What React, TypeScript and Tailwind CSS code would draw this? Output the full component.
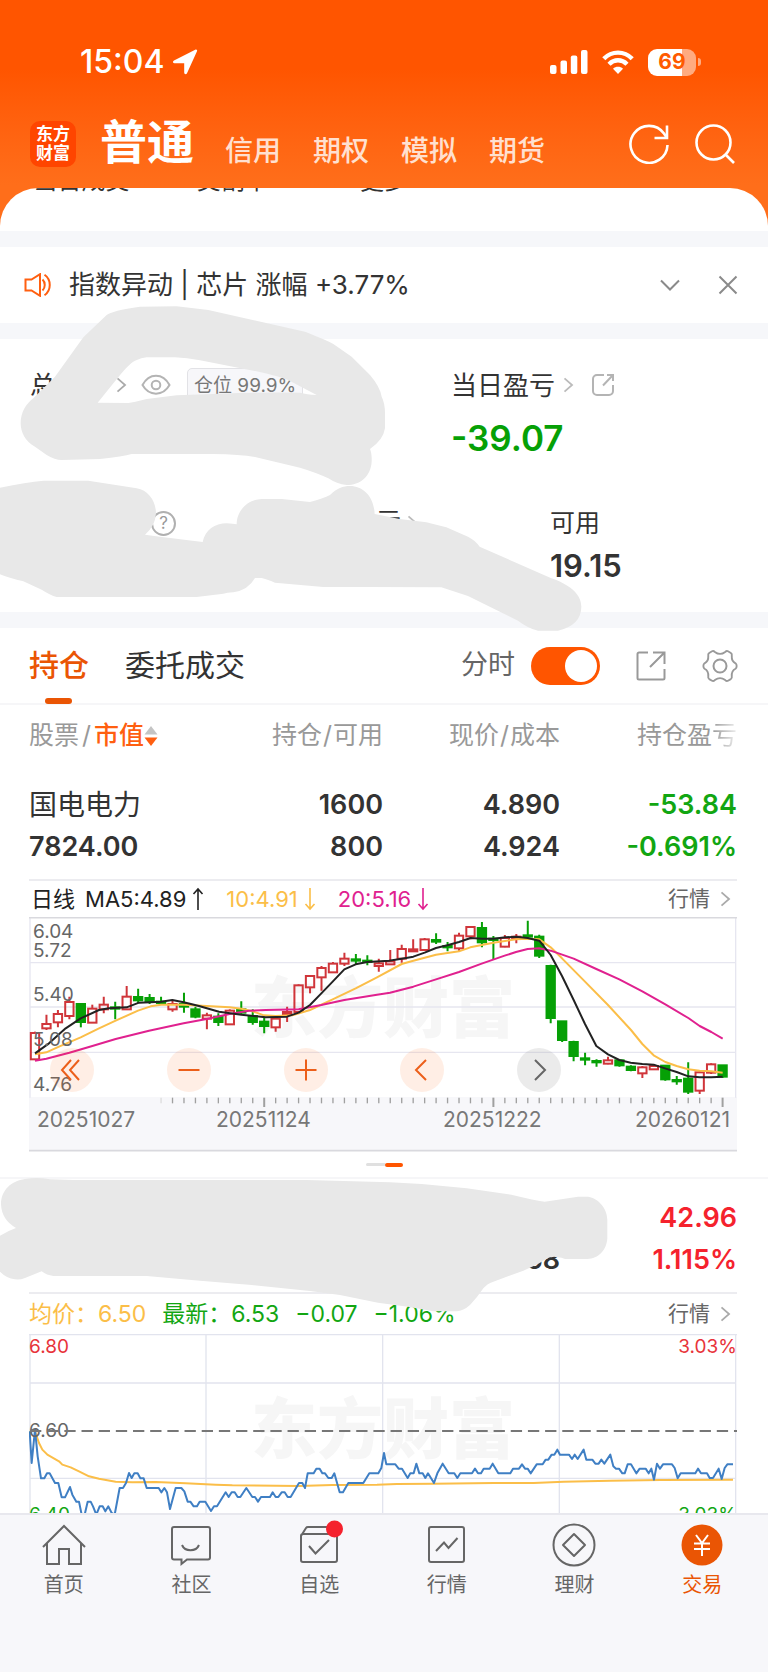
import type { ReactNode } from "react";

type Candle = ["r" | "g", number, number, number, number];

const PITCH = 34.38;
const FIRST_X = 108;

/* colour, high, body top, body bottom, low */
const candles: Candle[] = [
  ["r", 485, 489, 568, 568], ["r", 434, 462, 475, 480], ["r", 420, 432, 457, 472], ["r", 380, 396, 438, 448],
  ["g", 402, 402, 456, 472], ["r", 404, 416, 458, 458], ["r", 380, 404, 418, 430], ["g", 395, 412, 416, 448],
  ["r", 348, 380, 418, 420], ["g", 356, 381, 391, 400], ["g", 372, 384, 394, 402], ["g", 380, 395, 399, 405],
  ["r", 390, 402, 418, 425], ["g", 368, 402, 410, 428], ["g", 410, 418, 440, 445], ["r", 428, 436, 446, 478],
  ["g", 430, 440, 456, 468], ["r", 418, 422, 463, 463], ["g", 394, 418, 428, 434], ["g", 418, 438, 456, 464],
  ["g", 440, 455, 468, 490], ["r", 440, 446, 472, 485], ["r", 410, 426, 432, 456], ["r", 343, 346, 426, 426],
  ["r", 318, 318, 352, 370], ["r", 288, 294, 322, 362], ["r", 276, 281, 307, 307], ["r", 248, 266, 281, 288],
  ["g", 252, 268, 272, 282], ["g", 256, 272, 276, 286], ["r", 266, 280, 288, 305], ["r", 240, 274, 283, 283],
  ["r", 224, 237, 266, 278], ["r", 208, 238, 244, 246], ["r", 204, 208, 240, 240], ["g", 190, 210, 215, 222],
  ["g", 216, 228, 232, 244], ["r", 188, 197, 235, 243], ["r", 170, 171, 199, 208], ["g", 156, 174, 217, 232],
  ["g", 198, 206, 210, 268], ["r", 195, 204, 230, 232], ["r", 192, 200, 204, 220], ["g", 152, 196, 200, 206],
  ["g", 194, 200, 257, 264], ["g", 284, 288, 444, 460], ["g", 454, 454, 510, 516], ["g", 512, 516, 558, 574],
  ["g", 548, 565, 569, 586], ["g", 568, 573, 577, 590], ["r", 560, 571, 581, 583], ["g", 570, 571, 586, 590],
  ["g", 586, 590, 600, 604], ["r", 588, 592, 610, 624], ["r", 584, 588, 598, 600], ["g", 585, 587, 628, 632],
  ["g", 618, 630, 634, 644], ["g", 577, 626, 665, 672], ["r", 604, 607, 662, 672], ["r", 580, 583, 608, 612],
  ["g", 586, 586, 620, 624],
];

const MA5 =
  "108,550 150,520 200,475 245,445 300,420 330,415 383,412 420,398 486,395 520,390 554,397 600,408 660,425 727,434 800,442 864,440 899,428 933,405 967,370 1001,335 1036,298 1070,283 1105,276 1170,272 1208,266 1243,260 1277,248 1311,234 1345,226 1380,216 1415,204 1450,206 1483,206 1520,202 1552,200 1586,204 1621,212 1655,255 1689,318 1724,390 1758,462 1792,528 1827,553 1861,570 1895,578 1930,582 1964,584 1998,595 2033,606 2068,619 2102,622 2137,622 2171,620";
const MA10 =
  "108,553 142,547 180,530 245,502 300,475 350,452 417,422 455,409 486,404 554,404 623,408 692,412 727,416 761,424 795,436 830,438 880,436 933,420 1001,388 1070,355 1134,322 1208,282 1243,272 1311,254 1380,244 1414,232 1483,218 1551,208 1586,206 1621,208 1655,232 1689,265 1758,335 1827,405 1896,480 1930,522 1964,556 1999,576 2033,588 2068,598 2102,602 2137,604 2171,608";
const MA20 =
  "108,572 142,566 211,548 280,528 350,507 450,482 554,460 623,447 692,432 750,422 800,420 899,418 967,405 1036,390 1134,374 1173,368 1243,350 1311,328 1380,306 1448,281 1517,257 1551,246 1586,237 1621,235 1655,242 1724,266 1792,297 1861,328 1930,364 1999,403 2068,444 2102,468 2137,486 2171,506";
const PRICE =
  "92,785 98,880 108,780 116,860 126,926 136,926 144,911 152,911 168,940 178,940 188,983 198,983 213,952 220,975 232,996 240,996 248,1035 257,1035 266,996 275,996 282,1010 292,1035 302,1010 311,1010 319,1025 328,1010 338,1030 347,1035 362,955 372,955 381,940 390,910 398,925 406,911 416,911 424,926 434,926 443,955 479,955 487,968 496,955 504,968 513,1018 530,955 547,955 556,965 566,996 574,996 584,1010 594,1010 602,996 619,996 636,1024 645,1010 654,1010 680,968 689,982 698,968 707,968 716,982 724,982 742,955 760,982 768,982 777,996 786,982 813,982 821,968 830,982 838,982 848,968 857,968 866,982 875,982 900,940 910,940 918,955 926,911 944,911 952,897 962,897 970,911 978,911 988,925 998,925 1006,911 1022,968 1032,968 1048,940 1093,940 1111,911 1138,911 1147,895 1155,850 1162,884 1189,884 1199,897 1209,897 1226,925 1234,911 1244,911 1252,882 1261,911 1271,911 1279,925 1287,911 1305,940 1315,911 1331,882 1349,911 1366,911 1375,925 1384,911 1419,911 1428,897 1437,911 1446,911 1454,897 1472,897 1481,882 1498,911 1534,911 1542,897 1560,897 1569,884 1578,897 1586,897 1595,911 1613,884 1631,884 1640,870 1648,870 1658,855 1666,855 1675,840 1683,855 1710,855 1719,868 1727,855 1736,868 1754,840 1762,870 1780,870 1789,882 1799,882 1807,870 1816,882 1834,855 1843,890 1851,897 1860,897 1870,911 1877,911 1886,884 1896,884 1912,911 1922,897 1940,897 1949,911 1957,897 1965,930 1974,882 1983,897 1992,884 2019,884 2027,895 2036,926 2045,911 2089,911 2097,897 2106,911 2124,911 2132,925 2142,925 2159,897 2168,928 2177,895 2185,884 2202,884";
const AVERAGE =
  "108,785 120,820 130,840 145,855 180,875 190,885 215,893 240,905 270,920 300,927 350,936 400,938 470,937 560,941 650,945 700,947 900,949 1000,946 1134,945 1194,943 1304,942 1484,940 1604,940 1694,936 1834,933 1984,931 2202,930";

function Chevron({ className = "" }: { className?: string }) {
  return (
    <svg viewBox="0 0 12 18" className={`h-[16px] w-[11px] ${className}`} fill="none" stroke="currentColor" strokeWidth="2">
      <path d="M1.5 1.5 10 9 1.5 16.5" />
    </svg>
  );
}

function Watermark({ y }: { y: number }) {
  return (
    <text x="222" y={y} fontSize="66" fontWeight="900" fill="#f6f6f6">
      东方财富
    </text>
  );
}

function StatusBar() {
  return (
    <div className="flex h-[74px] items-center pt-[50px] pr-[63px] pl-[80px] text-white">
      <span className="text-[32px] leading-[26px] font-medium">15:04</span>
      <svg viewBox="0 0 26 26" className="ml-2 size-[26px]" fill="currentColor">
        <path d="M25 2.2 15 24.2c-.7 1.5-2.8 1.1-2.8-.6V14.2H2.6c-1.8 0-2.2-2.1-.6-2.8L23.2.8c1.3-.6 2.4.3 1.8 1.4Z" />
      </svg>
      <div className="ml-auto flex items-center gap-[14px] pr-1">
        <svg viewBox="0 0 38 24" className="h-[24px] w-[38px]" fill="currentColor">
          <rect x="0" y="15" width="6.500" height="9" rx="2" />
          <rect x="10.500" y="10.500" width="6.500" height="13.500" rx="2" />
          <rect x="20.800" y="5.500" width="6.500" height="18.500" rx="2" />
          <rect x="31" y="0" width="6.500" height="24" rx="2" />
        </svg>
        <svg viewBox="0 0 32 24" className="h-[24px] w-[32px]" fill="none" stroke="currentColor" strokeWidth="4.400">
          <path d="M1.800 8.800C9.800.6 22.200.6 30.200 8.800" />
          <path d="M7 14.200c5.200-5.200 12.800-5.200 18 0" />
          <path d="m16 24-5-5.200c2.800-2.600 7.200-2.600 10 0Z" fill="currentColor" stroke="none" />
        </svg>
        <div className="flex items-center gap-[2px]">
          <span className="flex h-[27px] w-[48px] items-center justify-center rounded-[9px] bg-linear-to-r from-white from-70% to-[#ffab80] to-70% text-[21px] font-bold text-[#ff5a00]">
            69
          </span>
          <span className="h-[8px] w-[3px] rounded-r-full bg-[#ffab80]" />
        </div>
      </div>
    </div>
  );
}

function Header() {
  return (
    <header className="bg-linear-to-b from-[#ff5500] from-30% to-[#ff6e1a] to-80%">
      <StatusBar />
      <div className="flex h-[114px] items-center pt-[26px] pr-[33px] pl-[30px] text-white">
        <div className="grid size-[46px] place-content-center rounded-[10px] bg-[#ff4500] text-[17px] leading-[19px] font-bold">
          <span>东方</span>
          <span>财富</span>
        </div>
        <nav className="ml-6 flex items-center text-[#ffe0d0]">
          <a href="#normal" className="mt-[-4px] text-[47px] leading-[60px] font-bold text-white">
            普通
          </a>
          <div className="mt-[14px] ml-[31px] flex gap-8 text-[28px] leading-[36px] font-medium">
            <a href="#credit">信用</a>
            <a href="#option">期权</a>
            <a href="#demo">模拟</a>
            <a href="#futures">期货</a>
          </div>
        </nav>
        <div className="ml-auto flex gap-[26px]">
          <button type="button" aria-label="刷新">
            <svg viewBox="0 0 40 40" className="size-[40px]" fill="none" stroke="currentColor" strokeWidth="2.600">
              <path d="M38.500 21A18.500 18.500 0 1 1 35 9.500L38 14" />
              <path d="M38 1.500V14H25.500" />
            </svg>
          </button>
          <button type="button" aria-label="搜索">
            <svg viewBox="0 0 40 40" className="size-[40px]" fill="none" stroke="currentColor" strokeWidth="2.600">
              <circle cx="18.500" cy="18.500" r="17" />
              <path d="m30 30 9 9" />
            </svg>
          </button>
        </div>
      </div>
      <div className="h-[43px] overflow-hidden rounded-t-[38px] bg-white">
        <div className="mt-[-23px] grid grid-cols-5 px-[6px] text-center text-[24px] leading-[32px]">
          <span>当日成交</span>
          <span>交割单</span>
          <span>更多</span>
        </div>
      </div>
    </header>
  );
}

function Notice() {
  return (
    <section className="flex h-[76px] items-center pr-[30px] pl-6">
      <svg viewBox="0 0 28 24" className="h-[24px] w-[28px] text-[#ff5f10]" fill="none" stroke="currentColor" strokeWidth="2">
        <path d="M1.500 6.500h6L16 1.200v21.600l-8.500-5.300h-6Z" />
        <path d="M18.500 6.500c3 2.800 3 8.200 0 11M20.500 1.800c7 4.800 7 15.600 0 20.400" />
      </svg>
      <p className="ml-[17px] text-[26px] leading-[36px]">指数异动 | 芯片 涨幅 +3.77%</p>
      <div className="ml-auto flex items-center gap-[38px] text-[#8a8a8a]">
        <button type="button" aria-label="展开">
          <svg viewBox="0 0 20 12" className="h-[12px] w-[20px]" fill="none" stroke="currentColor" strokeWidth="2">
            <path d="m1 1.500 9 9 9-9" />
          </svg>
        </button>
        <button type="button" aria-label="关闭">
          <svg viewBox="0 0 20 20" className="size-[20px]" fill="none" stroke="currentColor" strokeWidth="2">
            <path d="m1.500 1.500 17 17M18.500 1.500l-17 17" />
          </svg>
        </button>
      </div>
    </section>
  );
}

function Assets() {
  return (
    <section className="h-[273px] pt-7 pl-[30px]">
      <div className="flex">
        <div className="flex h-[36px] w-[421px] items-center text-[26px]">
          <span>总</span>
          <Chevron className="ml-[60px] text-[#aaa]" />
          <svg viewBox="0 0 30 22" className="ml-[14px] h-[22px] w-[30px] text-[#b4b4b4]" fill="none" stroke="currentColor" strokeWidth="2">
            <path d="M1.500 11C8-1.500 22-1.500 28.500 11 22 22.500 8 22.500 1.500 11Z" />
            <circle cx="15" cy="11" r="4.300" />
          </svg>
          <span className="ml-4 h-[35px] rounded-[5px] border border-[#e2e2e6] bg-[#f7f7fa] px-[6px] text-[19px] leading-[33px] text-[#777]">
            仓位 99.9%
          </span>
        </div>
        <div>
          <div className="flex h-[36px] items-center text-[26px]">
            <span>当日盈亏</span>
            <Chevron className="ml-2 text-[#bbb]" />
            <svg viewBox="0 0 24 24" className="ml-[17px] size-[24px] text-[#b4b4b4]" fill="none" stroke="currentColor" strokeWidth="2">
              <path d="M13 2H6a4 4 0 0 0-4 4v12a4 4 0 0 0 4 4h12a4 4 0 0 0 4-4v-6M12 12.500 22 2M16 2h6v6" />
            </svg>
          </div>
          <p className="mt-[15px] text-[35px] leading-[40px] font-semibold text-[#06a006]">-39.07</p>
        </div>
      </div>
      <div className="mt-[47px] flex">
        <div className="flex h-[36px] w-[346px] items-center">
          <span className="ml-[121px] grid size-[25px] place-content-center rounded-full border-2 border-[#b0b0b0] text-[17px] leading-[20px] text-[#999]">
            ?
          </span>
        </div>
        <div className="flex h-[36px] w-[174px] items-center text-[25px]">
          <span>亏</span>
          <Chevron className="ml-[6px] text-[#bbb]" />
        </div>
        <div>
          <p className="text-[25px] leading-[36px]">可用</p>
          <p className="mt-[6px] text-[31px] leading-[38px] font-semibold">19.15</p>
        </div>
      </div>
    </section>
  );
}

function Tabs() {
  return (
    <div className="flex h-[77px] items-center border-b-2 border-[#f6f6f8] pr-[30px] pl-[29px]">
      <div role="tablist" className="flex h-full gap-9 text-[30px]">
        <button
          type="button"
          role="tab"
          aria-selected="true"
          className="relative font-medium text-[#ea5504] after:absolute after:-bottom-px after:left-[16px] after:h-[6px] after:w-[27px] after:rounded-full after:bg-[#ea5504]"
        >
          持仓
        </button>
        <button type="button" role="tab" aria-selected="false">
          委托成交
        </button>
      </div>
      <label className="ml-auto flex items-center gap-4 text-[27px] text-[#666]">
        分时
        <input
          type="checkbox"
          role="switch"
          defaultChecked
          className="relative h-[38px] w-[69px] appearance-none rounded-full bg-[#bbb] before:absolute before:top-[3px] before:left-[4px] before:size-[32px] before:rounded-full before:bg-white checked:bg-[#ff5500] checked:before:left-[34px]"
        />
      </label>
      <button type="button" aria-label="分享" className="ml-[36px]">
        <svg viewBox="0 0 30 30" className="size-[30px] text-[#999]" fill="none" stroke="currentColor" strokeWidth="2">
          <path d="M12 1.500H3A1.500 1.500 0 0 0 1.500 3v24A1.500 1.500 0 0 0 3 28.500h24a1.500 1.500 0 0 0 1.500-1.500v-9M14 16 28.500 1.500M17 1.500h11.500V13" />
        </svg>
      </button>
      <button type="button" aria-label="设置" className="ml-[36px]">
        <svg viewBox="0 0 36 36" className="size-[36px] text-[#999]" fill="none" stroke="currentColor" strokeWidth="2">
          <path
            d="M9.500 2.300q1.500-.8 3 .7 5.500 4.200 11 0 1.500-1.500 3-.7l3 1.800q1.500 1 1 3-.4 6 4 8 1.200.8 1.200 2.900t-1.200 2.900q-4.400 2-4 8 .5 2-1 3l-3 1.800q-1.500.8-3-.7-5.500-4.200-11 0-1.500 1.500-3 .7l-3-1.800q-1.500-1-1-3 .4-6-4-8Q.300 20.100.300 18t1.200-2.900q4.400-2 4-8-.5-2 1-3Z"
            transform="translate(1.100 1.100) scale(.94)"
          />
          <circle cx="18" cy="18" r="6.500" />
        </svg>
      </button>
    </div>
  );
}

function QuoteLink() {
  return (
    <a href="#quote" className="ml-auto flex items-center gap-[10px] pr-[6px] text-[21px] text-[#666]">
      行情
      <Chevron className="text-[#aaa]" />
    </a>
  );
}

function Arrow({ up = false }: { up?: boolean }) {
  return (
    <svg viewBox="0 0 12 24" className="ml-[6px] h-[24px] w-[12px]" fill="none" stroke="currentColor" strokeWidth="1.600">
      <path d={up ? "M6 23V2M1.500 7 6 2l4.500 5" : "M6 1v21M1.500 17 6 22l4.500-5"} />
    </svg>
  );
}

const controls: { label: string; path: string; muted?: boolean }[] = [
  { label: "最早", path: "M21 12 12 22l9 10M29 12 20 22l9 10" },
  { label: "缩小", path: "M11.500 22h21" },
  { label: "放大", path: "M11.500 22h21M22 11.500v21" },
  { label: "向前", path: "M26 12 16 22l10 10" },
  { label: "向后", path: "M18 12 28 22 18 32", muted: true },
];

function CandleChart() {
  return (
    <div className="relative">
      <svg viewBox="0 0 708 235" className="block h-auto w-full">
        <rect x="0" y="180" width="708" height="54" fill="#f7f7fa" />
        <Watermark y={115} />
        <g transform="scale(.33333) translate(-90 -141)" fill="none">
          <path d="M92 278H2211M92 411H2211M92 547H2211M93 142V683M2210 142V683" stroke="#e6e6f0" strokeWidth="4" />
          <path d="M90 143H2214M90 842H2214" stroke="#d9d9de" strokeWidth="5" />
          {candles.map((_, i) => {
            if (i < 11) return null;
            const major = i % 20 === 0;
            const x = FIRST_X + i * PITCH;
            return (
              <path
                key={i}
                d={`M${x} 683V${major ? 711 : 700}`}
                stroke={i === 11 ? "#ddd" : "#a0a0a0"}
                strokeWidth={major ? 6 : 4}
              />
            );
          })}
          {candles.map(([kind, high, top, bottom, low], i) => {
            const x = FIRST_X + i * PITCH;
            const color = kind === "r" ? "#d0353a" : "#06a006";
            return (
              <g key={i} stroke={color} strokeWidth="6">
                <path d={`M${x} ${high}V${top}M${x} ${bottom}V${low}`} />
                <rect x={x - 12.5} y={top} width="25" height={bottom - top} fill={kind === "r" ? "none" : color} />
              </g>
            );
          })}
          <g strokeWidth="6" strokeLinejoin="round">
            <polyline points={MA10} stroke="#fbbe48" />
            <polyline points={MA20} stroke="#e0218f" />
            <polyline points={MA5} stroke="#222" />
          </g>
        </g>
        <g fontSize="19" fill="#666">
          <text x="4" y="21">6.04</text>
          <text x="4" y="40">5.72</text>
          <text x="4" y="84">5.40</text>
          <text x="4" y="129">5.08</text>
          <text x="4" y="174">4.76</text>
        </g>
        <g fontSize="21" fill="#777">
          <text x="8" y="210">20251027</text>
          <text x="187" y="210">20251124</text>
          <text x="414" y="210">20251222</text>
          <text x="701" y="210" textAnchor="end">20260121</text>
        </g>
      </svg>
      <div className="absolute top-[131px] right-[176px] left-[21px] flex justify-between">
        {controls.map((c) => (
          <button
            key={c.label}
            type="button"
            aria-label={c.label}
            className={`size-[44px] rounded-full ${c.muted ? "bg-[#999999]/20 text-[#666]" : "bg-[#ff5a00]/10 text-[#ec5f1a]"}`}
          >
            <svg viewBox="0 0 44 44" className="size-full" fill="none" stroke="currentColor" strokeWidth="2">
              <path d={c.path} />
            </svg>
          </button>
        ))}
      </div>
    </div>
  );
}

function IntradayChart() {
  return (
    <svg viewBox="0 0 708 179" className="block h-auto w-full">
      <Watermark y={119} />
      <g transform="scale(.33333) translate(-90 -493)" fill="none">
        <path
          d="M90 495H2214M92 640H2211M92 926H2211M93 495V1035M621 495V1035M1151 495V1035M1681 495V1035M2210 495V1035"
          stroke="#e2e4ee"
          strokeWidth="4"
        />
        <polyline points={AVERAGE} stroke="#fbbe48" strokeWidth="6" strokeLinejoin="round" />
        <polyline points={PRICE} stroke="#3f7fc4" strokeWidth="6" strokeLinejoin="round" />
      </g>
      <g fontSize="19">
        <text x="0" y="19" fill="#e8333a">6.80</text>
        <text x="708" y="19" textAnchor="end" fill="#e8333a">3.03%</text>
        <text x="0" y="103" fill="#666">6.60</text>
        <text x="0" y="187" fill="#12a612">6.40</text>
        <text x="708" y="187" textAnchor="end" fill="#12a612">3.03%</text>
      </g>
      <path d="M1 97H708" stroke="#777" strokeWidth="2" strokeDasharray="11.300 5.870" />
    </svg>
  );
}

function Holdings() {
  return (
    <div className="pr-[31px] pl-[29px]">
      <table className="w-full table-fixed text-right">
        <thead className="text-[25px] text-[#999]">
          <tr className="h-[61px] *:font-normal">
            <th scope="col">
              <span className="flex items-center gap-[3px]">
                股票<span>/</span>
                <button type="button" className="flex items-center font-medium text-[#ff5f10]">
                  市值
                  <svg viewBox="0 0 14 20" className="h-[20px] w-[14px]">
                    <path d="m7 0 6.500 8.500H.5Z" fill="#c4c4c4" />
                    <path d="M7 20 .5 11.500h13Z" fill="#ff5f10" />
                  </svg>
                </button>
              </span>
            </th>
            <th scope="col">持仓<span className="mx-px">/</span>可用</th>
            <th scope="col">现价<span className="mx-px">/</span>成本</th>
            <th scope="col">
              持仓盈<span className="bg-linear-to-r from-[#999] to-[#eeeeee] bg-clip-text text-transparent">亏</span>
            </th>
          </tr>
        </thead>
        <tbody>
          <tr className="h-[114px] border-b-2 border-[#ececf0] align-top text-[27px] leading-[42px] font-semibold *:pt-[18px]">
            <td className="text-left">
              <span className="block text-[28px] font-normal">国电电力</span>7824.00
            </td>
            <td>1600<br />800</td>
            <td>4.890<br />4.924</td>
            <td className="text-[#12a612]">-53.84<br />-0.691%</td>
          </tr>
          <tr>
            <td colSpan={4}>
              <div className="flex h-[36px] items-center text-[22px] text-[#222]">
                <span className="ml-[2px] text-[22px]">日线</span>
                <span className="ml-[10px]">MA5:4.89</span>
                <Arrow up />
                <span className="ml-[22px] text-[#fbbe48]">10:4.91</span>
                <span className="text-[#fbbe48]"><Arrow /></span>
                <span className="ml-[22px] text-[#e0218f]">20:5.16</span>
                <span className="text-[#e0218f]"><Arrow /></span>
                <QuoteLink />
              </div>
              <CandleChart />
              <div className="mr-[-31px] ml-[-29px] flex h-[27px] items-center justify-center border-b-2 border-[#f6f6f8]">
                <span className="h-[3px] w-[19px] rounded-l-full bg-[#e0e0e0]" />
                <span className="h-[4px] w-[18px] rounded-full bg-[#ff5500]" />
              </div>
            </td>
          </tr>
          <tr className="h-[114px] border-b-2 border-[#ececf0] align-top text-[27px] leading-[42px] font-semibold *:pt-[18px]">
            <td />
            <td />
            <td><br />58</td>
            <td className="text-[#f5222d]">42.96<br />1.115%</td>
          </tr>
          <tr>
            <td colSpan={4}>
              <div className="flex h-[40px] items-center text-[23px] text-[#12a612]">
                <span className="text-[#fbbe48]">均价：6.50</span>
                <span className="ml-4">最新：6.53</span>
                <span className="ml-4">−0.07</span>
                <span className="ml-4">−1.06%</span>
                <QuoteLink />
              </div>
              <IntradayChart />
            </td>
          </tr>
        </tbody>
      </table>
    </div>
  );
}

const navItems: { label: string; icon: ReactNode; active?: boolean }[] = [
  { label: "首页", icon: <path d="M1 24 22 3l21 21M5 20v21h12V26h10v15h12V20" /> },
  {
    label: "社区",
    icon: <path d="M5 4h34a2 2 0 0 1 2 2v28.500a2 2 0 0 1-2 2H18L12.500 41v-4.500H5a2 2 0 0 1-2-2V6a2 2 0 0 1 2-2ZM13 22c3 7 14 7 17 0" />,
  },
  {
    label: "自选",
    icon: (
      <>
        <path d="M6 11h32a2 2 0 0 1 2 2v24a2 2 0 0 1-2 2H6a2 2 0 0 1-2-2V13a2 2 0 0 1 2-2ZM4 13l5-8q.6-1 2-1h27a2 2 0 0 1 2 2v7M12 23l6.500 7.500L32 17" />
        <circle cx="37.500" cy="6" r="8.500" fill="#f5222d" stroke="none" />
      </>
    ),
  },
  {
    label: "行情",
    icon: <path d="M6 4h31a2 2 0 0 1 2 2v31a2 2 0 0 1-2 2H6a2 2 0 0 1-2-2V6a2 2 0 0 1 2-2ZM11 28l8-8.500 4.500 5.500 9-10" />,
  },
  {
    label: "理财",
    icon: (
      <>
        <circle cx="22" cy="22" r="20.500" />
        <path d="m22 11 11 11-11 11-11-11Z" strokeLinejoin="round" />
      </>
    ),
  },
  {
    label: "交易",
    active: true,
    icon: (
      <>
        <circle cx="22" cy="22" r="20.500" fill="#ea5504" stroke="none" />
        <path d="m16 12 6 8 6-8M22 20v13M14 20.500h16M14 26h16" stroke="#fff" />
      </>
    ),
  },
];

function BottomNav() {
  return (
    <nav className="grid min-h-[150px] flex-1 grid-cols-6 border-t-2 border-[#e8e8ee] bg-[#f7f7fa] pt-2 pr-[2px]">
      {navItems.map((item) => (
        <a
          key={item.label}
          href={`#${item.label}`}
          className={`flex flex-col items-center gap-1 text-[20px] leading-[28px] ${item.active ? "text-[#ea5504]" : "text-[#666]"}`}
        >
          <svg viewBox="0 0 44 44" className="size-[44px] overflow-visible" fill="none" stroke="currentColor" strokeWidth="2">
            {item.icon}
          </svg>
          {item.label}
        </a>
      ))}
    </nav>
  );
}

function Redactions() {
  return (
    <svg viewBox="0 0 768 1672" className="pointer-events-none absolute top-0 left-0 h-auto w-full" fill="#e8e8e8">
      <g transform="translate(0 240) scale(.33333)">
        <path
          fillRule="evenodd"
          d="M62 550C62 515 80 490 100 475L165 410 250 292 320 225Q335 212 420 200L530 199 625 210 915 275Q980 300 1000 312L1055 350 1110 405Q1140 440 1145 470 1155 490 1155 520V565Q1150 600 1110 627 1116 640 1115 665C1112 710 1080 735 1040 735Q1010 732 985 715 950 698 900 683L765 651Q720 643 640 642H395Q370 650 300 657L185 660Q165 660 140 645L105 620C75 605 62 575 62 550ZM293 488 345 424Q385 372 405 362 425 353 440 352L525 352Q560 354 600 361L760 392Q850 412 870 423L950 465Q920 463 900 458 760 455 530 466L440 477Q400 487 385 489Z"
        />
        <path d="M0 743Q80 727 130 722H265L410 745C445 750 468 785 468 820Q465 860 435 884L480 890 608 906C615 870 645 850 680 850Q700 851 710 853C710 810 745 778 785 777H845L930 786Q970 775 990 765C1010 745 1030 738 1050 738C1090 738 1122 770 1124 822L1199 837 1279 847 1339 862 1404 890Q1425 900 1439 920L1654 1015C1704 1032 1744 1060 1744 1100Q1744 1155 1674 1172H1614Q1584 1165 1554 1142L1489 1110 1404 1068 1324 1042 1104 1041H970L825 1028Q800 1018 785 1014H765Q745 1050 700 1057 680 1058 670 1061L590 1071H170Q150 1065 125 1049L70 1024Q30 1015 0 1003Z" />
      </g>
      <path
        transform="translate(0 1170) scale(.33333)"
        d="M3 103C3 60 35 32 75 27Q110 20 150 28L220 30H920L1170 37 1265 42 1400 55 1534 74Q1600 90 1634 95L1734 80H1765C1795 85 1822 115 1822 150V205C1820 240 1795 267 1762 267H1695Q1685 262 1674 262 1655 257 1640 266L1614 282 1570 302 1480 335Q1460 342 1450 355 1430 385 1410 405 1390 423 1370 424H1300L1224 410 1134 398 1020 375 930 363 755 345 600 332 440 318H160Q140 316 125 304L75 324Q60 330 45 328 20 325 0 305V197Q25 182 48 174 5 150 3 103Z"
      />
    </svg>
  );
}

export default function App() {
  return (
    <div className="relative flex min-h-screen flex-col overflow-hidden bg-white font-['Inter','Noto_Sans_CJK_SC',sans-serif] text-[#333]">
      <Header />
      <div className="h-4 bg-[#f6f7fa]" />
      <Notice />
      <div className="h-4 bg-[#f6f7fa]" />
      <Assets />
      <div className="h-4 bg-[#f6f7fa]" />
      <Tabs />
      <Holdings />
      <BottomNav />
      <Redactions />
    </div>
  );
}
